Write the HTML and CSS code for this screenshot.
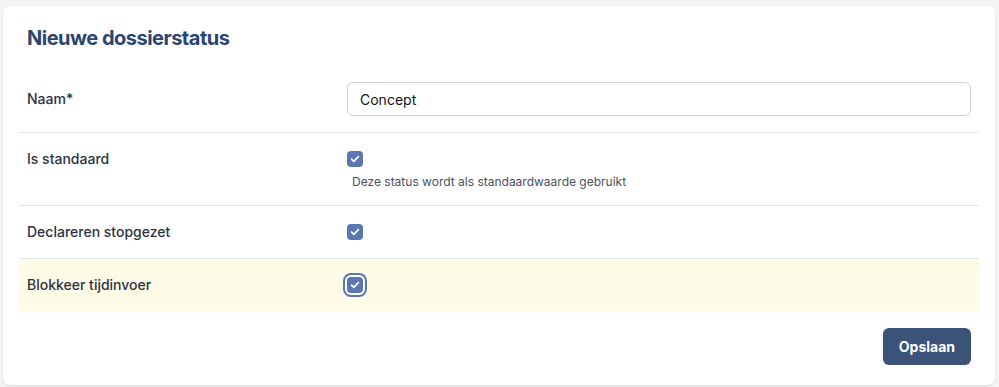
FILE: index.html
```html
<!DOCTYPE html>
<html lang="nl">
<head>
    <meta charset="UTF-8">
    <meta name="viewport" content="width=device-width, initial-scale=1.0">
    <title>Nieuwe dossierstatus</title>
    <link rel="stylesheet" href="styles.css">
</head>
<body>
    <!-- Formulier voor een nieuwe dossierstatus -->
    <div class="card">
        <h1 class="card-title">Nieuwe dossierstatus</h1>

        <div class="form-row form-row-input">
            <label class="form-label" for="naam">Naam*</label>
            <div class="form-field">
                <input type="text" id="naam" class="text-input" value="Concept">
            </div>
        </div>

        <div class="form-row">
            <div class="form-label">Is standaard</div>
            <div class="form-field">
                <div class="check-line"><span class="checkbox"><svg viewBox="0 0 16 16"><path d="M4.6 8.2l2.2 2.1 4.6-4.6" /></svg></span></div>
                <div class="help-text">Deze status wordt als standaardwaarde gebruikt</div>
            </div>
        </div>

        <div class="form-row">
            <div class="form-label">Declareren stopgezet</div>
            <div class="form-field">
                <div class="check-line"><span class="checkbox"><svg viewBox="0 0 16 16"><path d="M4.6 8.2l2.2 2.1 4.6-4.6" /></svg></span></div>
            </div>
        </div>

        <div class="form-row form-row-active">
            <div class="form-label">Blokkeer tijdinvoer</div>
            <div class="form-field">
                <div class="check-line"><span class="checkbox checkbox-focus"><svg viewBox="0 0 16 16"><path d="M4.6 8.2l2.2 2.1 4.6-4.6" /></svg></span></div>
            </div>
        </div>

        <div class="form-actions">
            <button class="btn-primary">Opslaan</button>
        </div>
    </div>
</body>
</html>
```

FILE: styles.css
```css
/* Algemeen */
body, html {
    margin: 0;
    padding: 0;
    font-family: Inter, "Noto Sans", sans-serif;
    background-color: #f4f4f5;
    color: #2d3748;
}

body {
    padding: 6px 4px 3px 3px;
}

/* Kaart */
.card {
    background-color: #fff;
    border-radius: 7px;
    box-shadow: 0 1px 2px rgba(0, 0, 0, 0.12);
    padding: 0 16px 20px 16px;
}

.card-title {
    margin: 0;
    padding: 19px 8px 14px 8px;
    font-size: 20px;
    line-height: 26px;
    font-weight: 700;
    letter-spacing: -0.5px;
    color: #2b4571;
}

/* Formulierregels */
.form-row {
    display: grid;
    grid-template-columns: 320px 1fr;
    padding: 14px 8px;
    border-bottom: 1px solid #e3e5ea;
}

.form-row-input {
    padding: 17px 8px 16px 8px;
    align-items: center;
}

.form-row-active {
    background-color: #fefbe6;
    border-bottom: none;
}

.form-label {
    font-size: 14px;
    line-height: 24px;
    font-weight: 500;
    color: #2d3343;
}

.text-input {
    box-sizing: border-box;
    width: 100%;
    height: 34px;
    padding: 0 12px;
    border: 1px solid #cfd2d8;
    border-radius: 6px;
    font-family: inherit;
    font-size: 14px;
    color: #111;
    outline: none;
}

/* Vinkjes */
.check-line {
    height: 24px;
    display: flex;
    align-items: center;
}

.checkbox {
    box-sizing: border-box;
    width: 16px;
    height: 16px;
    border-radius: 4px;
    background-color: #5a77b1;
    display: inline-flex;
}

.checkbox svg {
    width: 16px;
    height: 16px;
    fill: none;
    stroke: #fff;
    stroke-width: 1.7;
    stroke-linecap: round;
    stroke-linejoin: round;
}

.checkbox-focus {
    box-shadow: 0 0 0 2px #fff, 0 0 0 4px #5a77b1;
}

.help-text {
    margin-top: 2px;
    padding-left: 5px;
    font-size: 12px;
    line-height: 18px;
    color: #4b5160;
}

/* Knoppen */
.form-actions {
    display: flex;
    justify-content: flex-end;
    padding: 17px 8px 0 8px;
}

.btn-primary {
    height: 37px;
    padding: 0 16px;
    border: none;
    border-radius: 6px;
    background-color: #3b5279;
    color: #fff;
    font-family: inherit;
    font-size: 14px;
    font-weight: 700;
    cursor: pointer;
}
```
